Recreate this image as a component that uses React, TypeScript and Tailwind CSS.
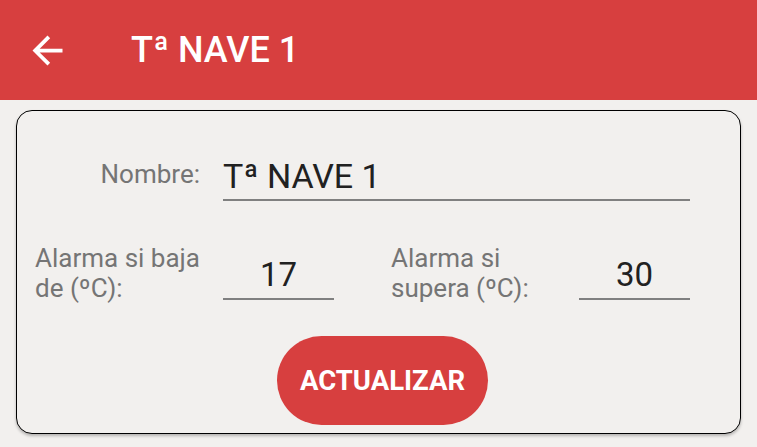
import React from "react";

export default function App() {
  return (
    <div className="w-[757px] h-[447px] bg-[#f2f0ee] overflow-hidden" style={{ fontFamily: "Roboto, 'Noto Sans', sans-serif" }}>
      <div className="h-[100px] bg-[#d73f3f] flex items-center">
        <svg className="ml-[25px] w-[45px] h-[45px]" viewBox="0 0 24 24" fill="#ffffff">
          <path d="M20 11H7.83l5.59-5.59L12 4l-8 8 8 8 1.41-1.41L7.83 13H20v-2z" />
        </svg>
        <div className="ml-[61px] text-white font-medium text-[36px] leading-none">Tª NAVE 1</div>
      </div>
      <div className="mx-[16px] mt-[10px] border border-black rounded-[16px] bg-[#f2f0ee] shadow-[0_2px_3px_rgba(0,0,0,0.25)] pl-[18px] pb-[8px]">
        <div className="flex items-start mt-[45px]">
          <div className="w-[165px] text-right text-[26px] leading-[32px] text-[#757575] mt-[2px] whitespace-nowrap">Nombre:</div>
          <div className="ml-[23px] w-[467px] border-b-2 border-[#808080] pb-[3px] text-[34px] leading-[40px] text-[#212121]">Tª NAVE 1</div>
        </div>
        <div className="flex items-start mt-[42px]">
          <div className="w-[165px] text-[26px] leading-[30px] text-[#757575] whitespace-nowrap">Alarma si baja<br />de (ºC):</div>
          <div className="ml-[23px] mt-[12px] w-[111px] border-b-2 border-[#808080] pb-[3px] text-center text-[33px] leading-[40px] text-[#212121]">17</div>
          <div className="ml-[57px] w-[188px] text-[26px] leading-[30px] text-[#757575] whitespace-nowrap">Alarma si<br />supera (ºC):</div>
          <div className="mt-[12px] w-[111px] border-b-2 border-[#808080] pb-[3px] text-center text-[33px] leading-[40px] text-[#212121]">30</div>
        </div>
        <div className="flex justify-center mt-[33px] pr-[10px]">
          <button className="w-[211px] h-[89px] rounded-full bg-[#d73f3f] text-white font-bold text-[27.5px] leading-none">ACTUALIZAR</button>
        </div>
      </div>
    </div>
  );
}
